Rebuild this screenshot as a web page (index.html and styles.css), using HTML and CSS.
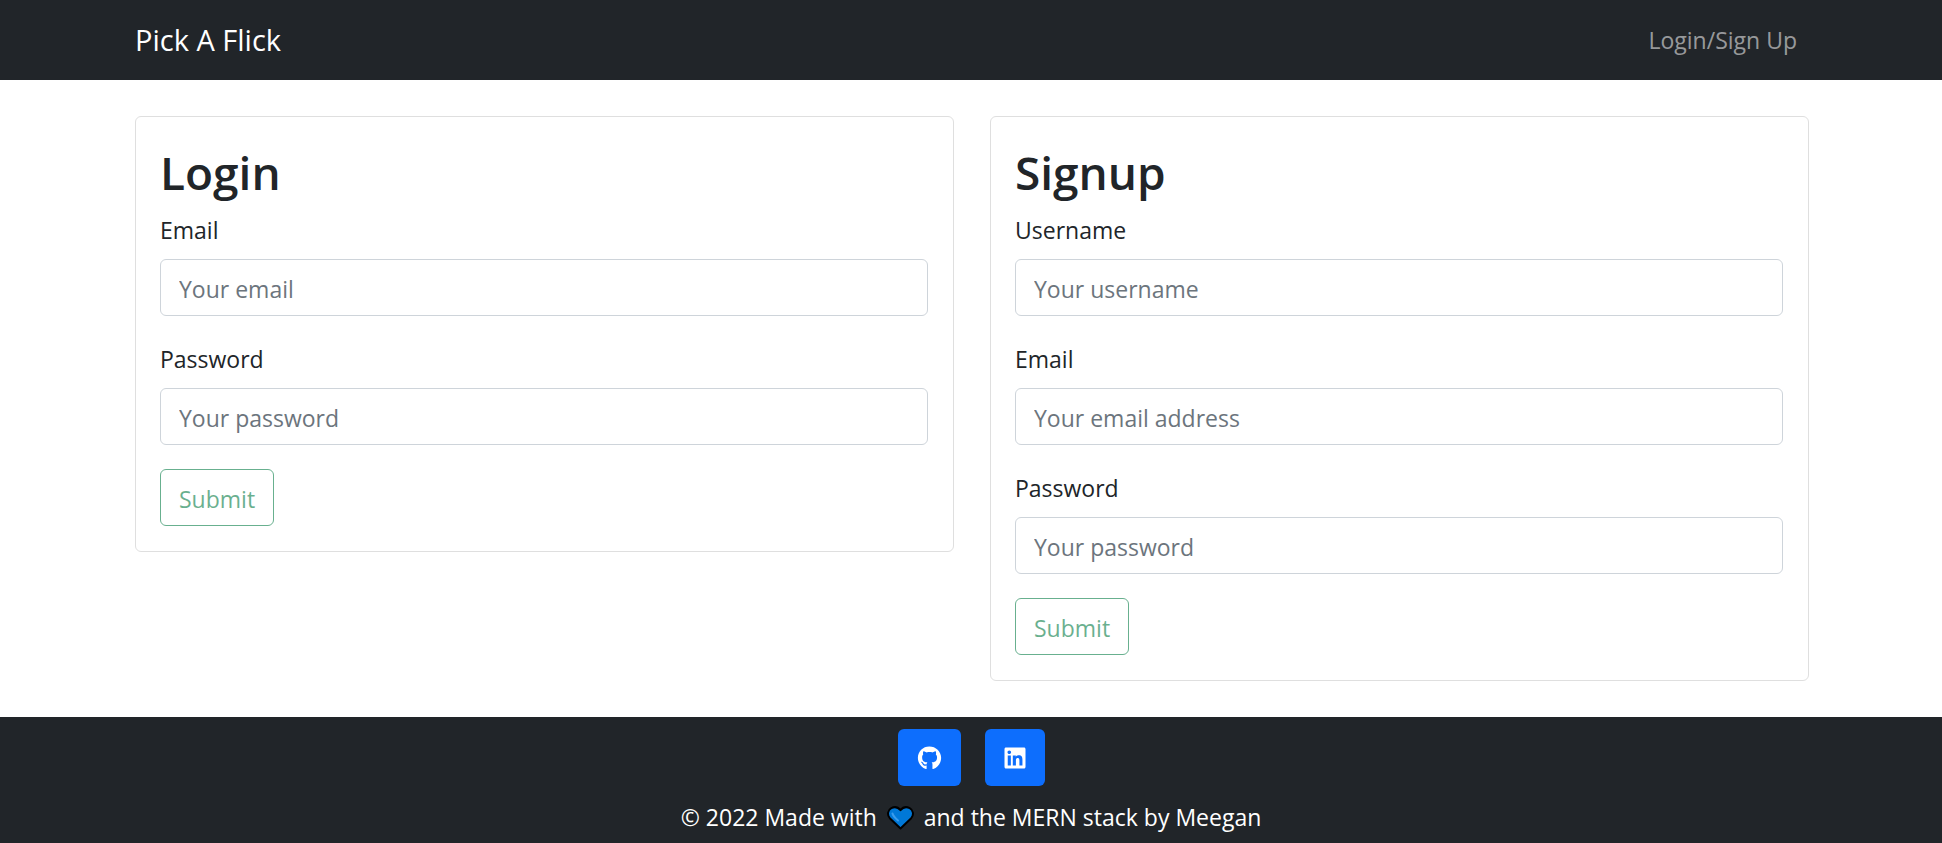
FILE: index.html
```html
<!DOCTYPE html>
<html lang="en">
<head>
  <meta charset="utf-8">
  <meta name="viewport" content="width=device-width, initial-scale=1">
  <title>Pick A Flick</title>
  <link rel="stylesheet" href="styles.css">
</head>
<body>
  <header class="navbar">
    <nav class="container navbar-row">
      <a class="brand" href="#">Pick A Flick</a>
      <a class="nav-link" href="#">Login/Sign Up</a>
    </nav>
  </header>

  <main class="container forms">
    <section class="card">
      <h2 class="card-title">Login</h2>
      <form>
        <div class="field">
          <label class="label" for="login-email">Email</label>
          <input class="input" id="login-email" type="text" placeholder="Your email">
        </div>
        <div class="field">
          <label class="label" for="login-password">Password</label>
          <input class="input" id="login-password" type="password" placeholder="Your password">
        </div>
        <button class="submit" type="submit" disabled>Submit</button>
      </form>
    </section>

    <section class="card">
      <h2 class="card-title">Signup</h2>
      <form>
        <div class="field">
          <label class="label" for="signup-username">Username</label>
          <input class="input" id="signup-username" type="text" placeholder="Your username">
        </div>
        <div class="field">
          <label class="label" for="signup-email">Email</label>
          <input class="input" id="signup-email" type="email" placeholder="Your email address">
        </div>
        <div class="field">
          <label class="label" for="signup-password">Password</label>
          <input class="input" id="signup-password" type="password" placeholder="Your password">
        </div>
        <button class="submit" type="submit" disabled>Submit</button>
      </form>
    </section>
  </main>

  <footer class="footer">
    <div class="social">
      <a class="social-link" href="#" aria-label="GitHub">
        <svg class="icon" viewBox="0 0 496 512" width="25" height="24" aria-hidden="true"><path fill="currentColor" d="M165.9 397.4c0 2-2.3 3.6-5.2 3.6-3.3.3-5.6-1.3-5.6-3.6 0-2 2.3-3.6 5.2-3.6 3-.3 5.6 1.3 5.6 3.6zm-31.1-4.5c-.7 2 1.3 4.3 4.3 4.9 2.6 1 5.6 0 6.2-2s-1.3-4.3-4.3-5.2c-2.6-.7-5.5.3-6.2 2.3zm44.2-1.7c-2.9.7-4.9 2.6-4.6 4.9.3 2 2.9 3.3 5.9 2.6 2.9-.7 4.9-2.6 4.6-4.6-.3-1.9-3-3.2-5.9-2.9zM244.8 8C106.1 8 0 113.3 0 252c0 110.9 69.8 205.8 169.5 239.2 12.8 2.3 17.3-5.6 17.3-12.1 0-6.2-.3-40.4-.3-61.4 0 0-70 15-84.7-29.8 0 0-11.4-29.1-27.8-36.6 0 0-22.9-15.7 1.6-15.4 0 0 24.9 2 38.6 25.8 21.9 38.6 58.6 27.5 72.9 20.9 2.3-16 8.8-27.1 16-33.7-55.9-6.2-112.3-14.3-112.3-110.5 0-27.5 7.6-41.3 23.6-58.9-2.6-6.5-11.1-33.3 2.6-67.9 20.9-6.5 69 27 69 27 20-5.6 41.5-8.5 62.8-8.5s42.8 2.9 62.8 8.5c0 0 48.1-33.6 69-27 13.7 34.7 5.2 61.4 2.6 67.9 16 17.7 25.8 31.5 25.8 58.9 0 96.5-58.9 104.2-114.8 110.5 9.2 7.9 17 22.9 17 46.4 0 33.7-.3 75.4-.3 83.6 0 6.5 4.6 14.4 17.3 12.1C428.2 457.8 496 362.9 496 252 496 113.3 383.5 8 244.8 8z"/></svg>
      </a>
      <a class="social-link" href="#" aria-label="LinkedIn">
        <svg class="icon" viewBox="0 0 448 512" width="22" height="24" aria-hidden="true"><path fill="currentColor" d="M416 32H31.9C14.3 32 0 46.5 0 64.3v383.4C0 465.5 14.3 480 31.9 480H416c17.6 0 32-14.5 32-32.3V64.3c0-17.8-14.4-32.3-32-32.3zM135.4 416H69V202.2h66.5V416zm-33.2-243c-21.3 0-38.5-17.3-38.5-38.5S80.9 96 102.2 96c21.2 0 38.5 17.3 38.5 38.5 0 21.3-17.2 38.5-38.5 38.5zm282.1 243h-66.4V312c0-24.8-.5-56.7-34.5-56.7-34.6 0-39.9 27-39.9 54.9V416h-66.4V202.2h63.7v29.2h.9c8.9-16.8 30.6-34.5 62.2-34.5 66.5 0 78.8 43.8 78.8 100.9V416z"/></svg>
      </a>
    </div>
    <p class="credit">© 2022 Made with
      <svg class="heart" viewBox="0 0 27 24" width="27" height="24" role="img" aria-label="love"><path d="M13.500 22.500 2.800 12.200C-.2 8.800.8 4 4.300 2.100 7.500.5 11.200 1.300 13.500 4.200 15.800 1.300 19.500.5 22.700 2.100c3.500 1.900 4.500 6.700 1.500 10.100z" fill="#0078d7" stroke="#000" stroke-width="2" stroke-linejoin="round"/><path d="M5.500 7.500c.8 3 3.200 5 5.500 7" fill="none" stroke="#3a9cec" stroke-width="2" stroke-linecap="round"/></svg>
      and the MERN stack by Meegan</p>
  </footer>
</body>
</html>
```
FILE: styles.css
```css
*,
*::before,
*::after {
  box-sizing: border-box;
}

body {
  display: flex;
  flex-direction: column;
  min-height: 100vh;
  margin: 0;
  background: #fff;
  color: #212529;
  font-family: "Open Sans", "Noto Sans", sans-serif;
  font-size: 23px;
  line-height: 36px;
}

.container {
  width: 100%;
  max-width: 1710px;
  margin: 0 auto;
  padding: 0 17px 0 19px;
}

.navbar {
  padding: 12px 0;
  background: #212529;
}

.navbar-row {
  display: flex;
  align-items: center;
  justify-content: space-between;
  min-height: 56px;
}

.brand {
  color: #fff;
  font-size: 29px;
  text-decoration: none;
}

.nav-link {
  padding: 0 12px;
  color: rgba(255, 255, 255, 0.55);
  text-decoration: none;
}

.forms {
  display: grid;
  grid-template-columns: repeat(auto-fit, minmax(min(100%, 400px), 1fr));
  align-items: start;
  gap: 36px;
  padding-top: 36px;
  padding-bottom: 36px;
}

.card {
  padding: 24px 25px 25px 24px;
  border: 1px solid #dfdfdf;
  border-radius: 6px;
}

.card-title {
  margin: 0 0 8px;
  font-size: 46px;
  font-weight: 600;
  line-height: 62px;
}

.field {
  margin-bottom: 24px;
}

.label {
  display: block;
  margin-bottom: 10px;
  line-height: 38px;
}

.input,
.submit {
  display: block;
  height: 57px;
  padding: 10px 18px 8px;
  border: 1px solid #ced4da;
  border-radius: 6px;
  background: #fff;
  font: inherit;
}

.input {
  width: 100%;
  color: #212529;
}

.input::placeholder {
  color: #6c757d;
  opacity: 1;
}

.submit {
  border-color: #198754;
  color: #198754;
}

.submit:disabled {
  opacity: 0.65;
}

.footer {
  flex: 1;
  padding: 12px 18px 6px;
  background: #212529;
  color: #fff;
}

.social {
  display: flex;
  justify-content: center;
  gap: 24px;
}

.social-link {
  display: flex;
  align-items: center;
  height: 57px;
  padding: 0 19px;
  border-radius: 6px;
  background: #0d6efd;
  color: #fff;
}

.credit {
  margin: 12px 0 0;
  line-height: 38px;
  text-align: center;
}

.heart {
  margin: 0 4px;
  vertical-align: -4px;
}
```
